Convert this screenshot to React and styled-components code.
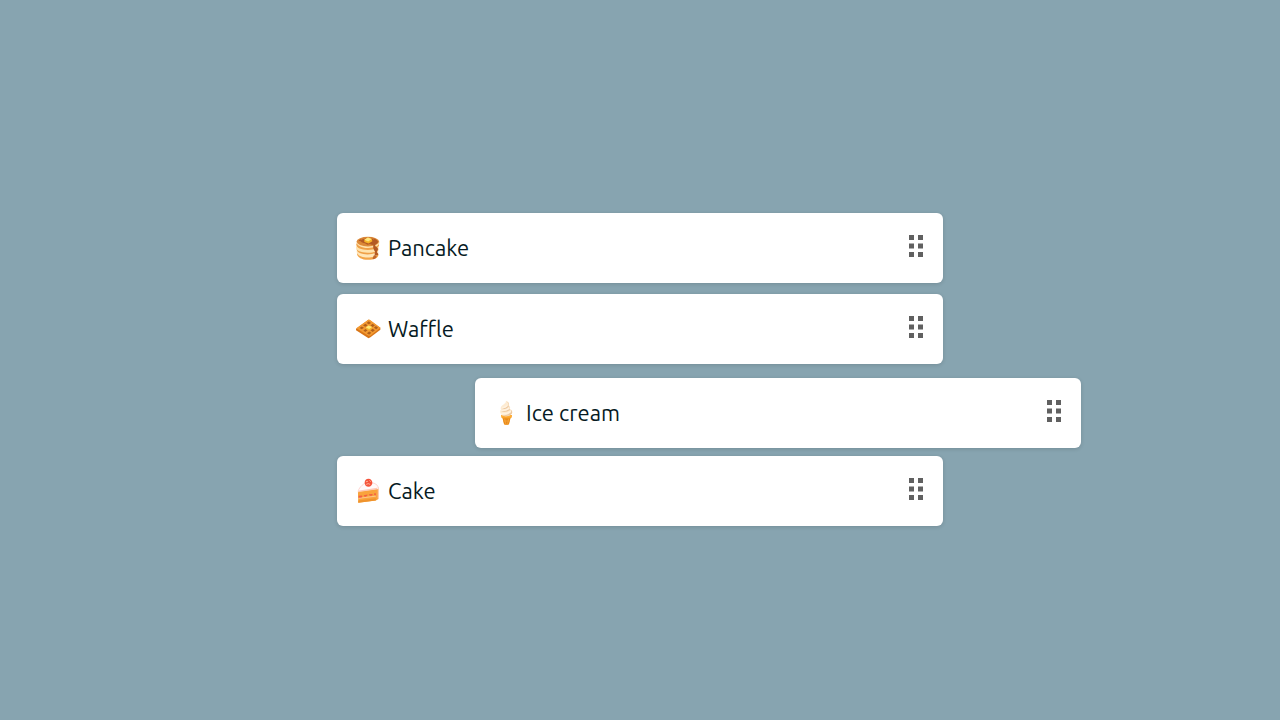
import React, { useRef, useState } from "react";
import styled, { createGlobalStyle } from "styled-components";

const GlobalStyle = createGlobalStyle`
  * {
    box-sizing: border-box;
  }
  body {
    margin: 0;
    background: #87a4b0;
    color: #061a23;
    font-family: Ubuntu, "Noto Sans", sans-serif;
  }
`;

const Page = styled.main`
  min-height: 100vh;
  display: flex;
  align-items: center;
  justify-content: center;
  padding: 39px 20px 20px;
  overflow: hidden;
`;

const List = styled.ul`
  width: 100%;
  max-width: 606px;
  margin: 0;
  padding: 0;
  list-style: none;
  display: flex;
  flex-direction: column;
  gap: 11px;
`;

const Item = styled.li`
  display: flex;
  align-items: center;
  gap: 7px;
  min-height: 70px;
  padding: 0 19px;
  background: #ffffff;
  border-radius: 6px;
  box-shadow: 0 1px 4px rgba(0, 0, 0, 0.14);
  font-size: 22px;
  line-height: 28px;
  user-select: none;
`;

const Name = styled.span`
  flex: 1;
`;

const Picture = styled.svg`
  width: 25px;
  height: 26px;
  flex: none;
`;

const Handle = styled.button`
  display: flex;
  padding: 0 0 4px;
  border: none;
  background: transparent;
  color: #606060;
  cursor: grab;
  touch-action: none;
  svg {
    width: 15px;
    height: 22px;
  }
`;

function Pancake() {
    return (
        <Picture viewBox="12 15 78 78" aria-hidden="true">
            <path d="M15 71c0 11 14 20 34 20 20 0 33-7 33-17l-3-9H18z" fill="#f3a447" />
            <path d="M14 66c0 10 15 18 34 18 20 0 34-8 34-17l-3-8-63-1z" fill="#ffe6b8" />
            <path d="M14 57c0 10 15 17 34 17 20 0 34-7 34-15l-3-9H16z" fill="#efa048" />
            <path d="M12 52c0 10 15 17 36 17 21 0 35-6 35-16l-4-10H16z" fill="#ffe3ad" />
            <path d="M13 43c0 10 15 17 36 17 21 0 35-7 35-15l-3-11H16z" fill="#efa048" />
            <path d="M14 36c0 10 15 18 35 18s36-7 36-17l-5-8H19z" fill="#ffe2ac" />
            <ellipse cx="49" cy="34" rx="35" ry="15" fill="#dd8a38" />
            <path d="M20 31c7-9 44-13 57-2 7 6 3 11-4 13-3 3 0 8 4 10 4 3 5 7 2 10-3 3-2 6 1 8 3 3 1 7-4 7s-7-3-6-6c3-3 2-6-1-9-3-5-4-11-3-18-6 2-8-3-15-1-5 3-7-3-12-4-8-1-12-2-11-5 1-2-8-1-8-3z" fill="#b35a24" />
            <path d="M68 77c5-1 9 0 8 4s-6 8-11 8c-3-1 1-4 0-6z" fill="#c0662b" />
            <path d="M28 27c9-5 30-7 39-1M22 35c6 5 14 4 18 7" fill="none" stroke="#d98538" strokeWidth="3" strokeLinecap="round" />
            <path d="M38 28l11-7 12 5 2 7-12 7-13-5z" fill="#f6b328" />
            <path d="M38 28l11-7 12 5-11 8z" fill="#ffe780" />
        </Picture>
    );
}

function Waffle() {
    return (
        <Picture viewBox="12 15 78 78" aria-hidden="true">
            <path d="M12 53l40-29 36 26v6L57 80l-6 3-39-25z" fill="#d87518" />
            <path d="M13 52l37-27h5l33 25-31 25h-6z" fill="#f39a31" />
            <path d="M23 51l7-5 7 4-7 5zm11-8l7-5 7 4-7 5zm11-8l7-5 7 5-7 4zM35 59l7-5 6 4-7 5zm22-16l7-5 7 5-7 5zM46 67l7-5 7 4-7 6zm11-9l7-5 7 5-7 5zm11-8l6-5 7 5-6 5z" fill="#b0601c" />
            <path d="M43 49l8-6 11 5v5l-9 6-10-5z" fill="#f2b42e" />
            <path d="M43 49l8-6 11 5-9 6z" fill="#ffe875" />
        </Picture>
    );
}

function IceCream() {
    return (
        <Picture viewBox="12 15 78 78" aria-hidden="true">
            <path d="M35 60h33l-2 9-3 2-4 17c-2 4-14 4-16 0l-4-17-3-2z" fill="#f49a25" />
            <path d="M39 71l5 17c3 3 11 3 14 0l5-17z" fill="#e88918" />
            <path d="M45 72l4 17m9-17l-4 17M41 79h20" fill="none" stroke="#f8ae46" strokeWidth="2" />
            <path d="M34 60h34l-1 8H35z" fill="#ffad35" />
            <path d="M49 16c9 2 12 9 9 14 6 4 5 9 3 12 8 0 10 10 5 15-5 8-25 10-31 2-5-5-5-12-1-16-3-5 0-11 6-14 5-4 10-6 9-13z" fill="#fdebd2" />
            <path d="M51 19c8 4 9 12-1 16-5 2-10 3-14 7 11 1 17-2 23-9 5 10-8 15-25 17 11 3 23-1 29-6 8 7-3 16-26 18 12 5 33-1 32-11-1-5-4-8-8-8 2-5 0-9-4-12 4-5 0-12-6-12z" fill="#ecc9a2" />
            <path d="M39 38c5-1 10-3 13-6M37 46c10 0 16-2 22-6M36 56c11 1 20-1 27-6" fill="none" stroke="#fff2e0" strokeWidth="4" strokeLinecap="round" />
        </Picture>
    );
}

function Cake() {
    return (
        <Picture viewBox="12 15 78 78" aria-hidden="true">
            <path d="M18 54l64-12v37l-8 5-55 7z" fill="#f9a33c" />
            <path d="M18 53c3-11 19-25 31-26 15-1 32 6 33 15v6l-63 11z" fill="#fffafa" />
            <path d="M19 53c4-11 18-25 30-26 15-1 31 6 32 15v35" fill="none" stroke="#ffbfb8" strokeWidth="2" />
            <path d="M18 53l60-9v5l-59 8z" fill="#ffc9b8" />
            <path d="M19 57l59-8v13l-58 8z" fill="#f9a33c" />
            <path d="M20 69l11-1c2 5-1 8-5 8l-6-1zm16-2l12-2c0 7-10 10-12 2zm16-3l12-1c0 7-10 9-12 1zm16-2l6-1v7c-3 1-6-2-6-6z" fill="#f35f42" />
            <path d="M20 77l54-7" fill="none" stroke="#ffd9b5" strokeWidth="2" />
            <path d="M19 84l55-7v7l-55 7z" fill="#ef932d" />
            <path d="M39 28c0-7 5-12 12-12s12 6 12 13c0 6-5 11-12 12-7 0-12-6-12-13z" fill="#f5533a" />
            <path d="M44 25l4-1m7-2l2 2m-12 9l5-2 5 2" fill="none" stroke="#ffb49b" strokeWidth="3" strokeLinecap="round" />
        </Picture>
    );
}

function DragIcon() {
    return (
        <svg viewBox="0 0 15 22" fill="currentColor" aria-hidden="true">
            <path d="M0 0h5v5H0zM9 0h5v5H9zM0 8.5h5v5H0zM9 8.5h5v5H9zM0 17h5v5H0zM9 17h5v5H9z" />
        </svg>
    );
}

const desserts = [
    { name: "Pancake", Icon: Pancake },
    { name: "Waffle", Icon: Waffle },
    { name: "Ice cream", Icon: IceCream },
    { name: "Cake", Icon: Cake },
];

function App() {
    const [drag, setDrag] = useState({ name: "Ice cream", x: 138, y: 3 });
    const start = useRef(null);

    const grab = (e, name) => {
        const from = drag.name === name ? drag : { x: 0, y: 0 };
        start.current = { x: e.clientX - from.x, y: e.clientY - from.y };
        e.currentTarget.setPointerCapture(e.pointerId);
        setDrag({ name, x: from.x, y: from.y });
    };
    const move = (e) => {
        if (!start.current) return;
        setDrag({
            ...drag,
            x: e.clientX - start.current.x,
            y: e.clientY - start.current.y,
        });
    };
    const drop = () => {
        start.current = null;
        setDrag({ name: null, x: 0, y: 0 });
    };

    return (
        <Page>
            <GlobalStyle />
            <List>
                {desserts.map(({ name, Icon }) => (
                    <Item
                        key={name}
                        style={
                            drag.name === name
                                ? { transform: `translate(${drag.x}px, ${drag.y}px)` }
                                : undefined
                        }
                    >
                        <Icon />
                        <Name>{name}</Name>
                        <Handle
                            type="button"
                            aria-label={`Move ${name}`}
                            onPointerDown={(e) => grab(e, name)}
                            onPointerMove={move}
                            onPointerUp={drop}
                        >
                            <DragIcon />
                        </Handle>
                    </Item>
                ))}
            </List>
        </Page>
    );
}

export default App;
